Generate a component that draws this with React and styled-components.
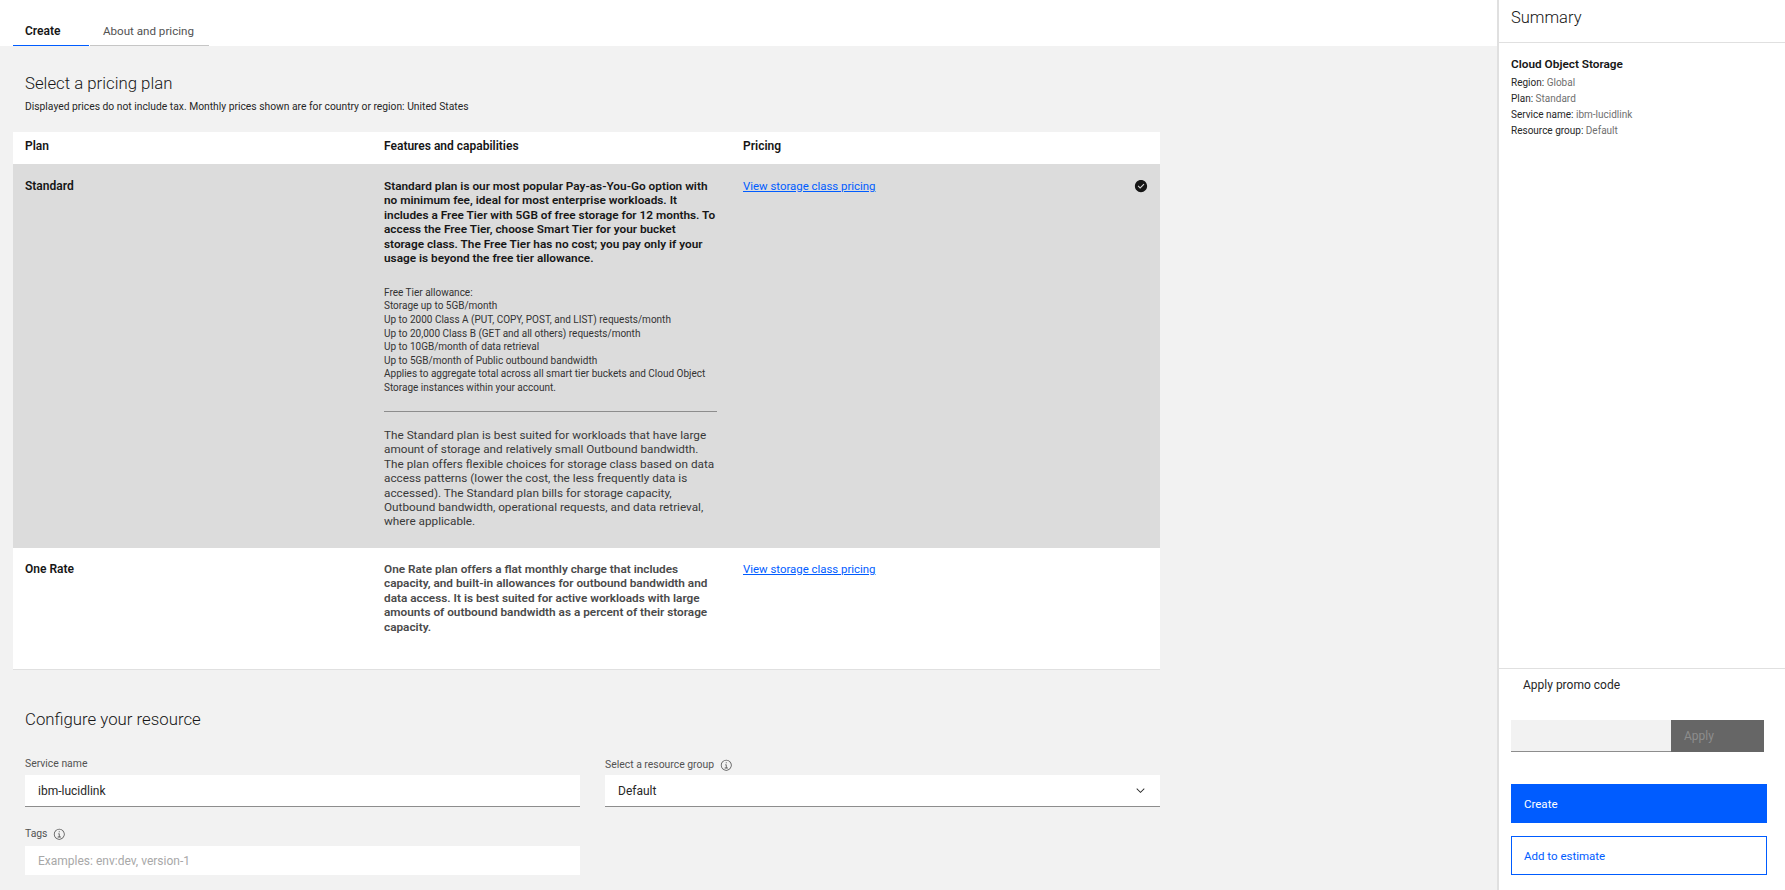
import React from 'react'
import styled, { createGlobalStyle } from 'styled-components'

const GlobalStyle = createGlobalStyle`
	html, body {
		margin: 0;
		padding: 0;
		height: 890px;
		overflow: hidden;
		background: #fff;
	}
	body {
		font-family: Roboto, "Liberation Sans", sans-serif;
		color: #161616;
	}
	* {
		box-sizing: border-box;
	}
`

const Page = styled.div`
	display: flex;
	width: 1785px;
	height: 890px;
	overflow: hidden;
`

const Main = styled.main`
	width: 1497px;
	flex: none;
	display: flex;
	flex-direction: column;
	background: #f2f2f2;
`

const Tabs = styled.nav`
	height: 46px;
	flex: none;
	background: #fff;
	padding-left: 13px;
	display: flex;
	gap: 1px;
`

const Tab = styled.div`
	width: ${p => (p.$active ? '76px' : '119px')};
	padding: 23px 0 0 ${p => (p.$active ? '12px' : '13px')};
	height: 46px;
	font-size: ${p => (p.$active ? '12px' : '11.6px')};
	line-height: 16px;
	font-weight: ${p => (p.$active ? 600 : 400)};
	color: ${p => (p.$active ? '#161616' : '#525252')};
	border-bottom: 1.5px solid ${p => (p.$active ? '#005cff' : '#c6c6c6')};
`

const Content = styled.div`
	padding-left: 13px;
	width: 1160px;
`

const SectionHead = styled.h2`
	margin: 0;
	padding-left: 12px;
	font-size: 16.8px;
	line-height: 22px;
	font-weight: 300;
	color: #161616;
`

const PlanHead = styled(SectionHead)`
	padding-top: 26px;
`

const ConfigHead = styled(SectionHead)`
	padding-top: 38px;
`

const Note = styled.p`
	margin: 6px 0 0;
	padding-left: 12px;
	height: 32px;
	font-size: 10.3px;
	line-height: 14px;
	color: #262626;
`

const HeadRow = styled.div`
	display: grid;
	grid-template-columns: 359px 359px 1fr;
	height: 32px;
	background: #fff;
	font-size: 12px;
	font-weight: 600;
	line-height: 29px;
	color: #161616;
`

const PlanRow = styled.div`
	display: grid;
	grid-template-columns: 359px 359px 1fr auto;
	height: ${p => p.$height}px;
	padding-top: ${p => (p.$selected ? '15px' : '14px')};
	background: ${p => (p.$selected ? '#dcdcdc' : '#fff')};
	border-bottom: ${p => (p.$selected ? 'none' : '1px solid #e0e0e0')};
`

const Cell = styled.div`
	padding-left: 12px;
`

const PlanName = styled(Cell)`
	font-size: 12px;
	line-height: 14.4px;
	font-weight: 600;
	color: #161616;
`

const Features = styled(Cell)`
	width: 345px;
`

const Lead = styled.p`
	margin: 0;
	font-size: 11.8px;
	line-height: 14.45px;
	font-weight: 600;
	color: ${p => (p.$muted ? '#4a4a4a' : '#161616')};
`

const Allowance = styled.div`
	margin-top: 20px;
	font-size: 10px;
	line-height: 13.6px;
	color: #333;
`

const Rule = styled.hr`
	margin: 16.5px 0 16px;
	border: 0;
	border-top: 1px solid #8d8d8d;
`

const Body = styled.p`
	margin: 0;
	font-size: 11.75px;
	line-height: 14.4px;
	color: #393939;
`

const PriceLink = styled.a`
	display: block;
	font-size: 11.4px;
	line-height: 14.4px;
	color: #005cff;
	text-decoration: underline;
`

const Check = styled.svg`
	width: 14px;
	height: 14px;
	margin: 0 12px 0 0;
	fill: #161616;
`

const Form = styled.div`
	display: grid;
	grid-template-columns: 555px 555px;
	column-gap: 25px;
	padding: 27px 0 0 12px;
`

const Field = styled.div`
	display: flex;
	flex-direction: column;
	justify-content: flex-end;
`

const TagsField = styled(Field)`
	margin-top: 20px;
`

const Label = styled.label`
	display: flex;
	align-items: center;
	gap: 6px;
	font-size: 10.4px;
	line-height: 14px;
	color: #525252;
	margin-bottom: ${p => p.$gap}px;
`

const Info = styled.svg`
	width: 12.5px;
	height: 12.5px;
	fill: #525252;
`

const TextInput = styled.input`
	display: block;
	width: 100%;
	height: ${p => (p.$short ? '29px' : '32px')};
	border: 0;
	border-bottom: ${p => (p.$short ? '0' : '1px solid #8d8d8d')};
	outline: 0;
	background: #fff;
	padding: 0 13px;
	font: inherit;
	font-size: 12px;
	color: #262626;
	&::placeholder {
		color: #a8a8a8;
		opacity: 1;
	}
`

const Select = styled.div`
	height: 32px;
	background: #fff;
	border-bottom: 1px solid #8d8d8d;
	padding: 0 13px;
	display: flex;
	align-items: center;
	justify-content: space-between;
	font-size: 12px;
	color: #262626;
`

const Chevron = styled.svg`
	width: 13px;
	height: 13px;
	fill: #262626;
`

const Sidebar = styled.aside`
	width: 288px;
	flex: none;
	border-left: 2px solid #e0e0e0;
	display: flex;
	flex-direction: column;
	background: #fff;
`

const SummaryHead = styled.div`
	height: 43px;
	flex: none;
	padding: 6px 0 0 12px;
	border-bottom: 1px solid #e0e0e0;
	font-size: 16.5px;
	line-height: 24px;
	font-weight: 300;
	color: #161616;
`

const SummaryBody = styled.div`
	flex: 1;
	padding: 12px 0 0 12px;
`

const SummaryTitle = styled.div`
	font-size: 11.8px;
	line-height: 18px;
	font-weight: 600;
	color: #161616;
	margin-bottom: 2px;
`

const SummaryLine = styled.div`
	font-size: 10px;
	line-height: 16px;
	color: #262626;
	span {
		color: #6f6f6f;
	}
`

const Footer = styled.div`
	height: 222px;
	flex: none;
	border-top: 1px solid #e0e0e0;
	padding: 8px 0 0 12px;
`

const PromoLabel = styled.div`
	padding-left: 12px;
	font-size: 12px;
	line-height: 16px;
	color: #262626;
`

const PromoRow = styled.div`
	display: flex;
	margin-top: 27px;
	width: 253px;
	height: 32px;
`

const PromoInput = styled.div`
	width: 160px;
	background: #f2f2f2;
	border-bottom: 1px solid #8d8d8d;
`

const PromoButton = styled.div`
	flex: 1;
	background: #666;
	padding-left: 13px;
	font-size: 12px;
	line-height: 32px;
	color: #8d8d8d;
`

const ActionButton = styled.div`
	width: 256px;
	height: 39px;
	padding-left: 12px;
	font-size: 11.5px;
	line-height: 38px;
	background: ${p => (p.$primary ? '#005cff' : '#fff')};
	color: ${p => (p.$primary ? '#fff' : '#005cff')};
	border: 1px solid #005cff;
	margin-top: ${p => (p.$primary ? '32px' : '13px')};
`

const InfoIcon = () => (
	<Info viewBox="0 0 32 32">
		<polygon points="17 22 17 14 13 14 13 16 15 16 15 22 12 22 12 24 20 24 20 22 17 22" />
		<path d="M16,8a1.5,1.5,0,1,0,1.5,1.5A1.5,1.5,0,0,0,16,8Z" />
		<path d="M16,30A14,14,0,1,1,30,16,14,14,0,0,1,16,30ZM16,4A12,12,0,1,0,28,16,12,12,0,0,0,16,4Z" />
	</Info>
)

const App = () => {
	return (
		<Page>
			<GlobalStyle />
			<Main>
				<Tabs>
					<Tab $active>Create</Tab>
					<Tab>About and pricing</Tab>
				</Tabs>
				<Content>
					<PlanHead>Select a pricing plan</PlanHead>
					<Note>Displayed prices do not include tax. Monthly prices shown are for country or region: United States</Note>
					<HeadRow>
						<Cell>Plan</Cell>
						<Cell>Features and capabilities</Cell>
						<Cell>Pricing</Cell>
					</HeadRow>
					<PlanRow $selected $height={384}>
						<PlanName>Standard</PlanName>
						<Features>
							<Lead>
								Standard plan is our most popular Pay-as-You-Go option with no minimum fee, ideal for most enterprise
								workloads. It includes a Free Tier with 5GB of free storage for 12 months. To access the Free Tier,
								choose Smart Tier for your bucket storage class. The Free Tier has no cost; you pay only if your usage is
								beyond the free tier allowance.
							</Lead>
							<Allowance>
								Free Tier allowance:
								<br />
								Storage up to 5GB/month
								<br />
								Up to 2000 Class A (PUT, COPY, POST, and LIST) requests/month
								<br />
								Up to 20,000 Class B (GET and all others) requests/month
								<br />
								Up to 10GB/month of data retrieval
								<br />
								Up to 5GB/month of Public outbound bandwidth
								<br />
								Applies to aggregate total across all smart tier buckets and Cloud Object Storage instances within your
								account.
							</Allowance>
							<Rule />
							<Body>
								The Standard plan is best suited for workloads that have large amount of storage and relatively small
								Outbound bandwidth. The plan offers flexible choices for storage class based on data access patterns
								(lower the cost, the less frequently data is accessed). The Standard plan bills for storage capacity,
								Outbound bandwidth, operational requests, and data retrieval, where applicable.
							</Body>
						</Features>
						<Cell>
							<PriceLink href="#">View storage class pricing</PriceLink>
						</Cell>
						<Check viewBox="0 0 16 16">
							<path d="M8,1C4.1,1,1,4.1,1,8c0,3.9,3.1,7,7,7s7-3.1,7-7C15,4.1,11.9,1,8,1z M7,11L4.3,8.3l0.9-0.8L7,9.3l4-3.9l0.9,0.8L7,11z" />
						</Check>
					</PlanRow>
					<PlanRow $height={122}>
						<PlanName>One Rate</PlanName>
						<Features>
							<Lead $muted>
								One Rate plan offers a flat monthly charge that includes capacity, and built-in allowances for outbound
								bandwidth and data access. It is best suited for active workloads with large amounts of outbound
								bandwidth as a percent of their storage capacity.
							</Lead>
						</Features>
						<Cell>
							<PriceLink href="#">View storage class pricing</PriceLink>
						</Cell>
					</PlanRow>
					<ConfigHead>Configure your resource</ConfigHead>
					<Form>
						<Field>
							<Label $gap={4}>Service name</Label>
							<TextInput defaultValue="ibm-lucidlink" />
						</Field>
						<Field>
							<Label $gap={3}>
								Select a resource group <InfoIcon />
							</Label>
							<Select>
								Default
								<Chevron viewBox="0 0 16 16">
									<path d="M8 11L3 6 3.7 5.3 8 9.6 12.3 5.3 13 6z" />
								</Chevron>
							</Select>
						</Field>
						<TagsField>
							<Label $gap={5}>
								Tags <InfoIcon />
							</Label>
							<TextInput $short placeholder="Examples: env:dev, version-1" />
						</TagsField>
					</Form>
				</Content>
			</Main>
			<Sidebar>
				<SummaryHead>Summary</SummaryHead>
				<SummaryBody>
					<SummaryTitle>Cloud Object Storage</SummaryTitle>
					<SummaryLine>
						Region: <span>Global</span>
					</SummaryLine>
					<SummaryLine>
						Plan: <span>Standard</span>
					</SummaryLine>
					<SummaryLine>
						Service name: <span>ibm-lucidlink</span>
					</SummaryLine>
					<SummaryLine>
						Resource group: <span>Default</span>
					</SummaryLine>
				</SummaryBody>
				<Footer>
					<PromoLabel>Apply promo code</PromoLabel>
					<PromoRow>
						<PromoInput />
						<PromoButton>Apply</PromoButton>
					</PromoRow>
					<ActionButton $primary>Create</ActionButton>
					<ActionButton>Add to estimate</ActionButton>
				</Footer>
			</Sidebar>
		</Page>
	)
}

export default App
